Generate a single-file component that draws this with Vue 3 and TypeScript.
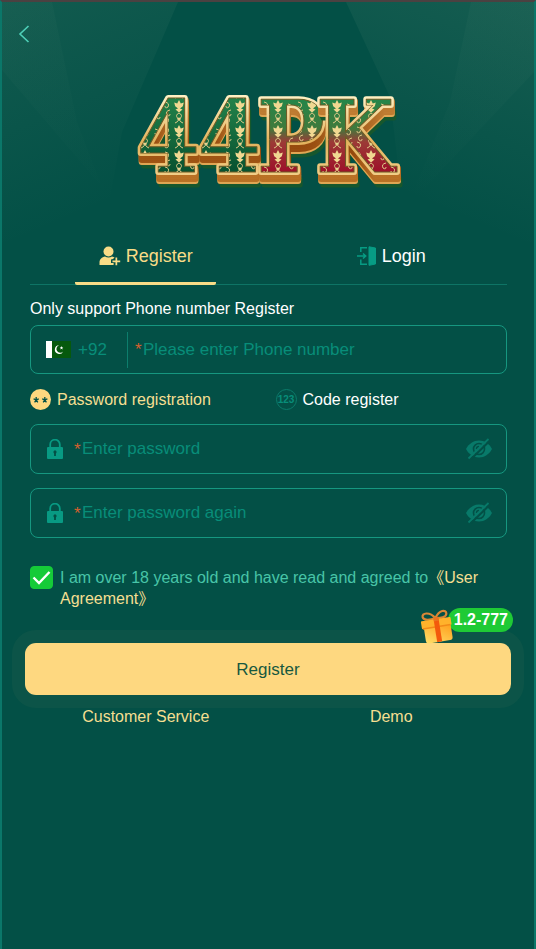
<script setup lang="ts">
import { ref } from 'vue'

interface LogoLetter {
  char: string
  x: number
  fill: string
  ornament: string
}

interface LogoLayer {
  name: string
  shift: string
}

const letters: LogoLetter[] = [
  { char: '4', x: 6, fill: 'url(#face-green)', ornament: 'url(#filigree)' },
  { char: '4', x: 67, fill: 'url(#face-green)', ornament: 'url(#filigree)' },
  { char: 'P', x: 126, fill: 'url(#face-mixed)', ornament: 'url(#filigree-stem)' },
  { char: 'K', x: 185, fill: 'url(#face-mixed)', ornament: 'url(#filigree-stem)' },
]

const depthLayers: LogoLayer[] = [
  { name: 'shade', shift: 'translate(3 13)' },
  { name: 'shade', shift: 'translate(2 11)' },
  { name: 'edge', shift: 'translate(1 9)' },
  { name: 'side', shift: 'translate(1 7)' },
  { name: 'side', shift: 'translate(1 4)' },
  { name: 'side', shift: 'translate(1 2)' },
  { name: 'rim', shift: 'translate(0 0)' },
]

const tab = ref<'register' | 'login'>('register')
const mode = ref<'password' | 'code'>('password')
const phone = ref('')
const password = ref('')
const passwordAgain = ref('')
const agreed = ref(true)
const showPassword = ref(false)
const showAgain = ref(false)
</script>

<template>
  <main class="page">
    <svg class="rays" viewBox="0 0 532 240" preserveAspectRatio="none" aria-hidden="true">
      <defs>
        <linearGradient id="ray-left" gradientUnits="userSpaceOnUse" x1="0" y1="0" x2="90" y2="210">
          <stop offset="0" stop-color="#a9c5a5" stop-opacity="0.09" />
          <stop offset="1" stop-color="#a9c5a5" stop-opacity="0" />
        </linearGradient>
        <linearGradient id="ray-right" gradientUnits="userSpaceOnUse" x1="532" y1="0" x2="442" y2="210">
          <stop offset="0" stop-color="#a9c5a5" stop-opacity="0.11" />
          <stop offset="1" stop-color="#a9c5a5" stop-opacity="0" />
        </linearGradient>
      </defs>
      <path d="M0 0H176L120 130L100 240H0Z" fill="url(#ray-left)" />
      <path d="M0 0H50L75 120L100 185L0 68Z" fill="url(#ray-left)" opacity="0.4" />
      <path d="M532 0H344L388 95L405 240H532Z" fill="url(#ray-right)" />
      <path d="M532 0H469L448 100L405 205L532 70Z" fill="url(#ray-right)" opacity="0.4" />
    </svg>

    <header class="top">
      <button class="back" type="button" aria-label="Back">
        <svg width="12" height="18" viewBox="0 0 12 18" fill="none" stroke="#4fd0b8" stroke-width="1.6">
          <path d="M10.500 1L2 9l8.500 8" />
        </svg>
      </button>
      <h1 class="logo">
        <svg width="276" height="108" viewBox="0 0 276 108" role="img" aria-label="44PK">
          <defs>
            <linearGradient id="face-green" gradientUnits="userSpaceOnUse" x1="0" y1="10" x2="0" y2="86">
              <stop offset="0" stop-color="#23824a" />
              <stop offset="1" stop-color="#07502f" />
            </linearGradient>
            <linearGradient id="face-mixed" gradientUnits="userSpaceOnUse" x1="0" y1="10" x2="0" y2="86">
              <stop offset="0" stop-color="#23864a" />
              <stop offset="0.4" stop-color="#3f7a3c" />
              <stop offset="0.58" stop-color="#9c3a36" />
              <stop offset="1" stop-color="#9d0d29" />
            </linearGradient>
            <linearGradient id="rim" gradientUnits="userSpaceOnUse" x1="0" y1="8" x2="0" y2="90">
              <stop offset="0" stop-color="#fff1c4" />
              <stop offset="0.55" stop-color="#e3b25c" />
              <stop offset="1" stop-color="#f3d08b" />
            </linearGradient>
            <linearGradient id="side" gradientUnits="userSpaceOnUse" x1="0" y1="8" x2="0" y2="92">
              <stop offset="0" stop-color="#c98a3c" />
              <stop offset="0.6" stop-color="#94480c" />
              <stop offset="1" stop-color="#c27a2a" />
            </linearGradient>
            <pattern id="filigree" width="34" height="25" patternUnits="userSpaceOnUse" x="25" y="12">
              <g fill="#f0d891">
                <path d="M17 0l1.800 3.500 3-1-1 3.700L18 8.500l2.500 1-3.500 3-3.500-3 2.500-1-2.800-2.300-1-3.700 3 1Z" />
                <circle cx="17" cy="19" r="1.500" />
              </g>
              <g fill="none" stroke="#dcc785" stroke-width="1">
                <path d="M17 13q-4 2-1.500 5t-2.500 5M17 13q4 2 1.500 5t2.500 5" />
                <path d="M3 2q5 1 3 5-3 2-3-1M8 10q-5 1-3 5 3 2 3-1M3 17q5 1 3 5-3 2-3-1M27 4q5 1 3 5-3 2-3-1M32 13q-5 1-3 5 3 2 3-1" />
              </g>
            </pattern>
            <pattern id="filigree-stem" href="#filigree" x="4" y="12" />
          </defs>
          <g v-for="(l, i) in letters" :key="i" class="letter" :transform="`translate(${l.x} 0)`">
            <use
              v-for="(layer, n) in depthLayers"
              :key="n"
              :href="`#glyph-${i}`"
              :class="layer.name"
              :transform="layer.shift"
            />
            <g class="face" :fill="l.fill">
              <text :id="`glyph-${i}`" y="84">{{ l.char }}</text>
            </g>
            <use :href="`#glyph-${i}`" :fill="l.ornament" />
          </g>
        </svg>
      </h1>
    </header>

    <nav class="tabs pair" aria-label="Account">
      <button class="tab" :class="{ active: tab === 'register' }" type="button" @click="tab = 'register'">
        <svg width="22" height="20" viewBox="0 0 22 20" fill="currentColor">
          <circle cx="9.500" cy="5.500" r="5" />
          <path d="M.5 19v-2.500C.5 13 3 11 6 10.500c2 1.400 5 1.400 7 0 1 .2 2 .6 2.600 1.100L14 13l-2 .5v3.500h2.600v2Z" />
          <path d="M16.500 11.500h1.700v3h3v1.700h-3v3h-1.700v-3h-3v-1.700h3Z" />
        </svg>
        <span>Register</span>
      </button>
      <button class="tab" :class="{ active: tab === 'login' }" type="button" @click="tab = 'login'">
        <svg width="20" height="20" viewBox="0 0 20 20" fill="none" stroke="#079c84" stroke-width="1.500">
          <path d="M10 1.800H3.800V6M3.800 13.500v4.700H10M0 10h8M6 7.500L8.700 10 6 12.500" />
          <path d="M12 .8L18.500 2v16L12 19.300Z" fill="#079c84" stroke-width="1" />
        </svg>
        <span>Login</span>
      </button>
    </nav>

    <form class="form" @submit.prevent>
      <label class="hint" for="phone">Only support Phone number Register</label>
      <div class="field phone">
        <button class="country" type="button" aria-label="Country code +92">
          <svg width="25" height="17" viewBox="0 0 25 17">
            <rect width="25" height="17" fill="#06590d" />
            <rect width="6" height="17" fill="#fff" />
            <path d="M13 4.200a4.400 4.400 0 1 0 4.200 6.300 3.900 3.900 0 1 1-4.200-6.300Z" fill="#fff" />
            <path d="M15.500 5l.5 1.200 1.300.1-1 .8.400 1.300-1.200-.7-1.100.7.300-1.300-1-.8 1.300-.1Z" fill="#fff" />
          </svg>
          <span>+92</span>
        </button>
        <span class="star">*</span>
        <input id="phone" v-model="phone" type="tel" placeholder="Please enter Phone number" />
      </div>

      <div class="modes pair">
        <button class="mode" :class="{ active: mode === 'password' }" type="button" @click="mode = 'password'">
          <svg width="21" height="21" viewBox="0 0 21 21">
            <circle cx="10.500" cy="10.500" r="10.500" fill="#fdd77f" />
            <path
              d="M6.200 8v2.800M3.600 9.800l2.600 1 2.600-1M4.600 13.300l1.600-2.500 1.600 2.500M14.800 8v2.800M12.200 9.800l2.600 1 2.600-1M13.200 13.300l1.600-2.500 1.600 2.500"
              fill="none"
              stroke="#035046"
              stroke-width="1.300"
            />
          </svg>
          <span>Password registration</span>
        </button>
        <button class="mode" :class="{ active: mode === 'code' }" type="button" @click="mode = 'code'">
          <span class="digits" aria-hidden="true">123</span>
          <span>Code register</span>
        </button>
      </div>

      <div class="field">
        <svg class="lock" width="16" height="20" viewBox="0 0 16 20">
          <path d="M3.200 9V5.500a4.800 4.800 0 0 1 9.600 0V9" fill="none" stroke="#089a83" stroke-width="1.800" />
          <rect y="8" width="16" height="12" rx="1" fill="#089a83" />
          <path d="M8 11.200a1.800 1.800 0 0 1 .9 3.200V17H7.100v-2.600A1.800 1.800 0 0 1 8 11.200Z" fill="#035046" />
        </svg>
        <span class="star">*</span>
        <input v-model="password" :type="showPassword ? 'text' : 'password'" placeholder="Enter password" aria-label="Enter password" />
        <button class="eye" type="button" aria-label="Show password" @click="showPassword = !showPassword">
          <svg width="26" height="22" viewBox="0 0 26 22">
            <path d="M0 11C3 5.500 7.500 2.500 13 2.500S23 5.500 26 11c-3 5.500-7.500 8.500-13 8.500S3 16.500 0 11Z" fill="#087969" />
            <circle cx="13" cy="11" r="5.500" fill="none" stroke="#035046" stroke-width="1.600" />
            <path d="M10.500 11a2.500 2.500 0 0 1 2.500-2.500" fill="none" stroke="#035046" stroke-width="1.400" />
            <path d="M4.500 21.500L24.300 2.200" stroke="#035046" stroke-width="2.200" />
            <path d="M2.500 20.500L22.500 1" stroke="#087969" stroke-width="1.800" />
          </svg>
        </button>
      </div>

      <div class="field">
        <svg class="lock" width="16" height="20" viewBox="0 0 16 20">
          <path d="M3.200 9V5.500a4.800 4.800 0 0 1 9.600 0V9" fill="none" stroke="#089a83" stroke-width="1.800" />
          <rect y="8" width="16" height="12" rx="1" fill="#089a83" />
          <path d="M8 11.200a1.800 1.800 0 0 1 .9 3.200V17H7.100v-2.600A1.800 1.800 0 0 1 8 11.200Z" fill="#035046" />
        </svg>
        <span class="star">*</span>
        <input v-model="passwordAgain" :type="showAgain ? 'text' : 'password'" placeholder="Enter password again" aria-label="Enter password again" />
        <button class="eye" type="button" aria-label="Show repeated password" @click="showAgain = !showAgain">
          <svg width="26" height="22" viewBox="0 0 26 22">
            <path d="M0 11C3 5.500 7.500 2.500 13 2.500S23 5.500 26 11c-3 5.500-7.500 8.500-13 8.500S3 16.500 0 11Z" fill="#087969" />
            <circle cx="13" cy="11" r="5.500" fill="none" stroke="#035046" stroke-width="1.600" />
            <path d="M10.500 11a2.500 2.500 0 0 1 2.500-2.500" fill="none" stroke="#035046" stroke-width="1.400" />
            <path d="M4.500 21.500L24.300 2.200" stroke="#035046" stroke-width="2.200" />
            <path d="M2.500 20.500L22.500 1" stroke="#087969" stroke-width="1.800" />
          </svg>
        </button>
      </div>

      <div class="terms">
        <span class="check">
          <input id="agree" v-model="agreed" type="checkbox" />
          <svg v-if="agreed" width="23" height="23" viewBox="0 0 23 23" fill="none" stroke="#fff" stroke-width="2.400">
            <path d="M3.500 11.500L9 17 19.500 6" />
          </svg>
        </span>
        <p>
          <label for="agree">I am over 18 years old and have read and agreed to</label>
          <a href="#agreement">《User Agreement》</a>
        </p>
      </div>

      <div class="action">
        <button class="submit" type="submit">Register</button>
        <div class="bonus">
          <svg width="34" height="36" viewBox="0 0 34 36">
            <defs>
              <linearGradient id="gift-box" x1="0" y1="1" x2="1" y2="0">
                <stop offset="0" stop-color="#ffe06a" />
                <stop offset="1" stop-color="#ff9a16" />
              </linearGradient>
            </defs>
            <g transform="rotate(-9 17 20)">
              <path d="M17 10C12 2 4 3 4.500 7S12 11 17 10C22 2 29 3 28.500 7S22 11 17 10Z" fill="none" stroke="#d98736" stroke-width="2.200" />
              <rect x="4" y="16" width="27" height="18" rx="3" fill="url(#gift-box)" />
              <rect x="2" y="11" width="30" height="8" rx="1" fill="#ffb22b" />
              <path d="M3 18h28v1.500H3Z" fill="#f28a18" />
              <path d="M15 11h5v23h-5Z" fill="#f35a0c" />
              <path d="M15 9h5v4h-5Z" fill="#e9731f" />
            </g>
          </svg>
          <strong>1.2-777</strong>
        </div>
      </div>
    </form>

    <footer class="links pair">
      <a href="#service">Customer Service</a>
      <a href="#demo">Demo</a>
    </footer>
  </main>
</template>

<style>
body {
  background: #035046;
}
</style>

<style scoped>
* {
  box-sizing: border-box;
}

.page {
  position: relative;
  min-height: 100vh;
  padding: 0 27px 24px 28px;
  border: 2px solid #0b7769;
  border-top-color: #4b4141;
  border-bottom: 0;
  background: #035046;
  color: #fff;
  font-family: "Liberation Sans", "Noto Sans CJK SC", sans-serif;
  font-size: 16px;
  line-height: 21px;
}

.rays {
  position: absolute;
  top: 0;
  left: 0;
  width: 100%;
  height: 240px;
}

button,
input {
  margin: 0;
  padding: 0;
  border: 0;
  background: none;
  color: inherit;
  font: inherit;
}

button {
  cursor: pointer;
}

svg {
  display: block;
  flex: none;
}

a {
  color: #f5df91;
  text-decoration: none;
}

.top,
.tabs,
.form,
.links {
  position: relative;
}

.back {
  display: flex;
  margin-left: -12px;
  padding-top: 23px;
}

.logo {
  display: flex;
  justify-content: center;
  margin: 45px 0 0;
}

.logo svg {
  overflow: visible;
}

.letter {
  font-family: "DejaVu Serif Condensed", "DejaVu Serif", serif;
  font-size: 100px;
  font-stretch: condensed;
  font-weight: 700;
  stroke-linejoin: round;
}

.shade {
  fill: #17572d;
  stroke: #17572d;
  stroke-width: 5px;
}

.edge {
  fill: #e0a553;
  stroke: #e0a553;
  stroke-width: 6px;
}

.side {
  fill: url(#side);
  stroke: url(#side);
  stroke-width: 6px;
}

.rim {
  fill: url(#rim);
  stroke: url(#rim);
  stroke-width: 6px;
}

.face {
  stroke: #6b5a24;
  stroke-width: 1px;
}

.pair {
  display: grid;
  grid-template-columns: 1fr 1fr;
  column-gap: 14px;
}

.tabs {
  margin-top: 32px;
  border-bottom: 1px solid #0e7465;
}

.tab {
  display: flex;
  align-items: center;
  justify-content: center;
  justify-self: center;
  gap: 5px;
  width: 141px;
  height: 57px;
  margin-bottom: -1px;
  padding-top: 2px;
  border-bottom: 3px solid transparent;
  border-radius: 2px;
  font-size: 18px;
}

.tab.active {
  border-bottom-color: #f8dc87;
  color: #f8dc87;
}

.hint {
  display: block;
  margin: 13px 0 6px;
}

.field {
  display: flex;
  align-items: center;
  height: 50px;
  margin-bottom: 14px;
  padding: 0 14px 0 16px;
  border: 1px solid #169780;
  border-radius: 8px;
  font-size: 17px;
}

.field input {
  flex: 1;
  min-width: 0;
  height: 40px;
  outline: 0;
}

.field input::placeholder {
  color: #088d79;
  opacity: 1;
}

.field.phone {
  height: 49px;
  margin-bottom: 15px;
  padding-left: 15px;
}

.country {
  display: flex;
  align-items: center;
  gap: 7px;
  width: 82px;
  height: 36px;
  margin-right: 7px;
  border-right: 1px solid #0d7e6d;
  color: #088d79;
}

.star {
  width: 8px;
  color: #d5602f;
}

.lock {
  margin-right: 11px;
}

.modes {
  margin-bottom: 14px;
}

.mode {
  display: flex;
  align-items: center;
  gap: 6px;
}

.mode.active {
  color: #f5df91;
}

.digits {
  width: 21px;
  height: 21px;
  border: 1px solid #0b7b6a;
  border-radius: 50%;
  color: #088d79;
  font-size: 10px;
  font-weight: 700;
  line-height: 19px;
  text-align: center;
}

.terms {
  display: flex;
  gap: 7px;
  margin-top: 28px;
  color: #48c5a8;
}

.terms p {
  flex: 1;
  margin: 0;
  padding-top: 1px;
}

.check {
  position: relative;
  width: 23px;
  height: 23px;
}

.check input {
  display: block;
  width: 23px;
  height: 23px;
  border: 1px solid #15cb38;
  border-radius: 4px;
  appearance: none;
}

.check input:checked {
  background: #15cb38;
}

.check svg {
  position: absolute;
  inset: 0;
  pointer-events: none;
}

.action {
  position: relative;
  margin: 34px -4px 0 -5px;
}

.submit {
  display: block;
  width: 100%;
  height: 52px;
  border-radius: 11px;
  background: #fed880;
  box-shadow: 0 0 0 13px rgb(254 216 128 / 4%);
  color: #17583f;
  font-size: 17px;
}

.bonus {
  position: absolute;
  top: -35px;
  right: -2px;
  display: flex;
  align-items: flex-start;
}

.bonus svg {
  z-index: 1;
  margin-right: -6px;
}

.bonus strong {
  height: 24px;
  padding: 0 5px 0 6px;
  border-radius: 12px;
  background: #1fca35;
  line-height: 24px;
}

.links {
  margin-top: 11px;
  text-align: center;
}
</style>
